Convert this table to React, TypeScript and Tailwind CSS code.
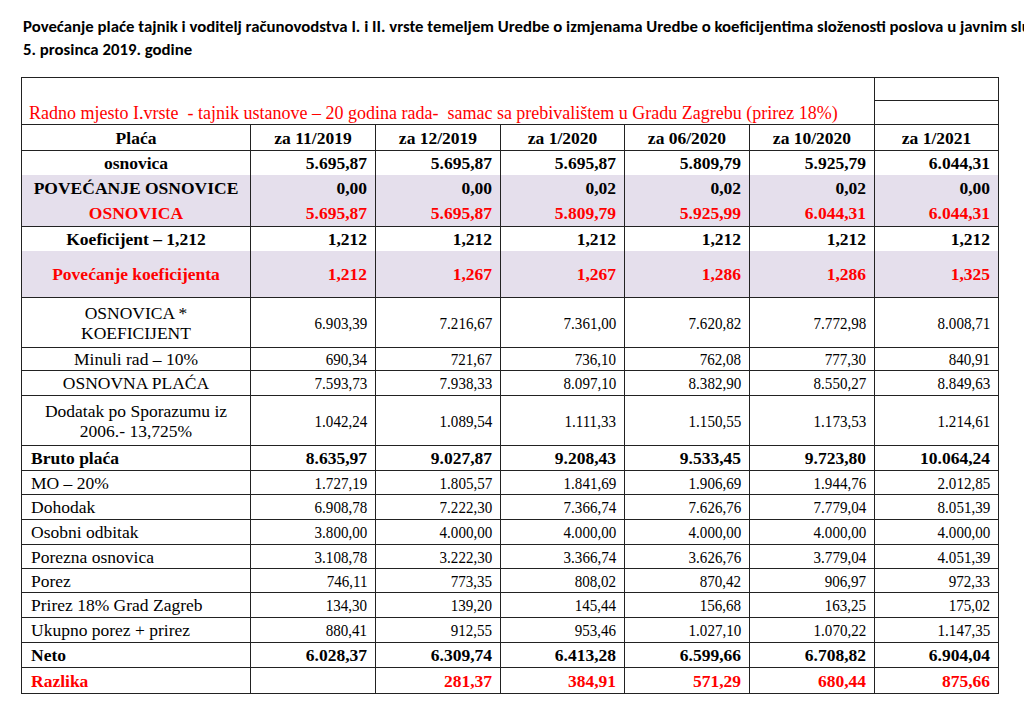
type Row = {
  label: string[];
  vals: string[];
  h: number;
  bold?: boolean;
  red?: boolean;
  shaded?: boolean;
  left?: boolean;
  line?: boolean;
};

const rows: Row[] = [
  { label: ["osnovica"], vals: ["5.695,87", "5.695,87", "5.695,87", "5.809,79", "5.925,79", "6.044,31"], h: 24, bold: true },
  { label: ["POVEĆANJE OSNOVICE"], vals: ["0,00", "0,00", "0,02", "0,02", "0,02", "0,00"], h: 26, bold: true, shaded: true },
  { label: ["OSNOVICA"], vals: ["5.695,87", "5.695,87", "5.809,79", "5.925,99", "6.044,31", "6.044,31"], h: 26, bold: true, red: true, shaded: true, line: true },
  { label: ["Koeficijent – 1,212"], vals: ["1,212", "1,212", "1,212", "1,212", "1,212", "1,212"], h: 24, bold: true },
  { label: ["Povećanje koeficijenta"], vals: ["1,212", "1,267", "1,267", "1,286", "1,286", "1,325"], h: 47, bold: true, red: true, shaded: true, line: true },
  { label: ["OSNOVICA *", "KOEFICIJENT"], vals: ["6.903,39", "7.216,67", "7.361,00", "7.620,82", "7.772,98", "8.008,71"], h: 50, line: true },
  { label: ["Minuli rad – 10%"], vals: ["690,34", "721,67", "736,10", "762,08", "777,30", "840,91"], h: 23, line: true },
  { label: ["OSNOVNA PLAĆA"], vals: ["7.593,73", "7.938,33", "8.097,10", "8.382,90", "8.550,27", "8.849,63"], h: 25, line: true },
  { label: ["Dodatak po Sporazumu iz", "2006.- 13,725%"], vals: ["1.042,24", "1.089,54", "1.111,33", "1.150,55", "1.173,53", "1.214,61"], h: 50, line: true },
  { label: ["Bruto plaća"], vals: ["8.635,97", "9.027,87", "9.208,43", "9.533,45", "9.723,80", "10.064,24"], h: 25, bold: true, left: true, line: true },
  { label: ["MO – 20%"], vals: ["1.727,19", "1.805,57", "1.841,69", "1.906,69", "1.944,76", "2.012,85"], h: 24, left: true, line: true },
  { label: ["Dohodak"], vals: ["6.908,78", "7.222,30", "7.366,74", "7.626,76", "7.779,04", "8.051,39"], h: 25, left: true, line: true },
  { label: ["Osobni odbitak"], vals: ["3.800,00", "4.000,00", "4.000,00", "4.000,00", "4.000,00", "4.000,00"], h: 25, left: true, line: true },
  { label: ["Porezna osnovica"], vals: ["3.108,78", "3.222,30", "3.366,74", "3.626,76", "3.779,04", "4.051,39"], h: 24, left: true, line: true },
  { label: ["Porez"], vals: ["746,11", "773,35", "808,02", "870,42", "906,97", "972,33"], h: 24, left: true, line: true },
  { label: ["Prirez 18% Grad Zagreb"], vals: ["134,30", "139,20", "145,44", "156,68", "163,25", "175,02"], h: 25, left: true, line: true },
  { label: ["Ukupno porez + prirez"], vals: ["880,41", "912,55", "953,46", "1.027,10", "1.070,22", "1.147,35"], h: 25, left: true, line: true },
  { label: ["Neto"], vals: ["6.028,37", "6.309,74", "6.413,28", "6.599,66", "6.708,82", "6.904,04"], h: 25, bold: true, left: true, line: true },
  { label: ["Razlika"], vals: ["", "281,37", "384,91", "571,29", "680,44", "875,66"], h: 26, bold: true, red: true, left: true, line: true },
];

const months = ["za 11/2019", "za 12/2019", "za 1/2020", "za 06/2020", "za 10/2020", "za 1/2021"];

export default function App() {
  return (
    <div className="w-[1024px] h-[720px] overflow-hidden bg-white text-black">
      <div className="pt-[15px] pl-[23px] font-['Carlito','Liberation_Sans',sans-serif] text-[16.8px] font-bold leading-[23px] whitespace-nowrap">
        <div>
          Povećanje plaće tajnik i voditelj računovodstva I. i II. vrste temeljem Uredbe o izmjenama Uredbe o koeficijentima složenosti poslova u javnim službama
        </div>
        <div>5. prosinca 2019. godine</div>
      </div>

      <table className="ml-[21px] mt-[16px] w-[977px] table-fixed border-collapse font-['Liberation_Serif',serif] text-[17.5px] leading-[20px]">
        <colgroup>
          <col className="w-[229px]" />
          <col className="w-[125px]" />
          <col className="w-[125px]" />
          <col className="w-[124px]" />
          <col className="w-[125px]" />
          <col className="w-[125px]" />
          <col className="w-[124px]" />
        </colgroup>
        <tbody>
          <tr className="h-[23px]">
            <td
              colSpan={6}
              rowSpan={2}
              className="border border-[#222] pl-[7px] pb-[1px] align-bottom text-[18px] text-[#ff0000] whitespace-nowrap"
            >
              Radno mjesto I.vrste&nbsp; - tajnik ustanove – 20 godina rada-&nbsp; samac sa prebivalištem u Gradu Zagrebu (prirez 18%)
            </td>
            <td className="border border-[#222]"></td>
          </tr>
          <tr className="h-[24px]">
            <td className="border border-[#222]"></td>
          </tr>
          <tr className="h-[26px] font-bold">
            <td className="border border-[#222] text-center">Plaća</td>
            {months.map((m) => (
              <td key={m} className="border border-[#222] text-center">
                {m}
              </td>
            ))}
          </tr>
          {rows.map((r, i) => {
            const cell = [
              "border-x border-[#222] align-middle",
              r.line ? "border-b" : "",
              r.shaded ? "bg-[#e5dfec]" : "",
              r.red ? "text-[#ff0000]" : "",
              r.bold ? "font-bold" : "",
            ].join(" ");
            return (
              <tr key={i} style={{ height: r.h }}>
                <td className={`${cell} ${r.left ? "text-left pl-[9px]" : "text-center"}`}>
                  {r.label.map((l) => (
                    <div key={l}>{l}</div>
                  ))}
                </td>
                {r.vals.map((v, j) => (
                  <td key={j} className={`${cell} text-right pr-[8px]`}>
                    {r.bold ? (
                      v
                    ) : (
                      <span className="inline-block origin-right scale-x-[0.86]">{v}</span>
                    )}
                  </td>
                ))}
              </tr>
            );
          })}
        </tbody>
      </table>
    </div>
  );
}
